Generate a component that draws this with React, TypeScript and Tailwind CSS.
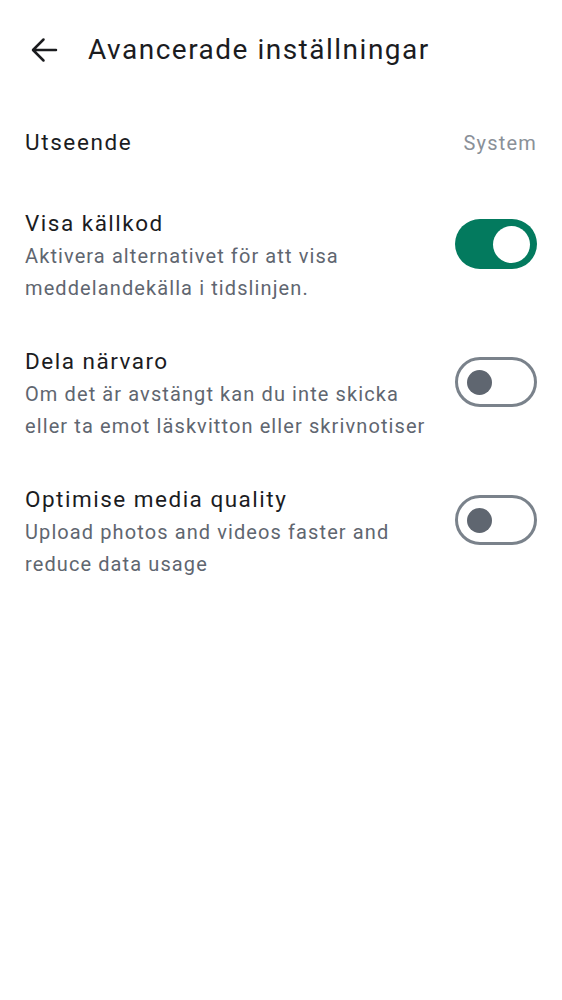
import { useState } from "react";

type Row = {
	readonly title: string;
	readonly desc: string;
	readonly on: boolean;
};

const rows: Row[] = [
	{ title: "Visa källkod", desc: "Aktivera alternativet för att visa meddelandekälla i tidslinjen.", on: true },
	{ title: "Dela närvaro", desc: "Om det är avstängt kan du inte skicka eller ta emot läskvitton eller skrivnotiser", on: false },
	{ title: "Optimise media quality", desc: "Upload photos and videos faster and reduce data usage", on: false },
];

function Toggle({ on, onClick }: { on: boolean; onClick: () => void }) {
	return (
		<button
			onClick={onClick}
			className={
				on
					? "mt-[13px] flex h-[50px] w-[82px] shrink-0 items-center justify-end rounded-full bg-[#037a5e] pr-[7px]"
					: "mt-[13px] flex h-[50px] w-[82px] shrink-0 items-center justify-start rounded-full border-[3px] border-[#7a828b] bg-white pl-[9px]"
			}
		>
			{on ? (
				<span className="h-[37px] w-[37px] rounded-full bg-white" />
			) : (
				<span className="h-[25px] w-[25px] rounded-full bg-[#5f6670]" />
			)}
		</button>
	);
}

export default function App() {
	const [state, setState] = useState<boolean[]>(rows.map((r) => r.on));

	return (
		<div className="min-h-[1000px] w-full bg-white font-['Roboto',sans-serif] text-[#1b1c1f]">
			<header className="flex h-[100px] items-center pl-[30px]">
				<svg width="28" height="28" viewBox="0 0 28 28" className="shrink-0">
					<path
						d="M26 14H3.5M13.5 3.5 3 14l10.5 10.5"
						fill="none"
						stroke="#1b1c1f"
						strokeWidth="2.5"
						strokeLinecap="round"
						strokeLinejoin="round"
					/>
				</svg>
				<h1 className="ml-[30px] text-[28px] leading-none tracking-[1.5px]">Avancerade inställningar</h1>
			</header>

			<div className="flex h-[86px] items-center justify-between px-[25px]">
				<span className="text-[22.5px] tracking-[1.6px]">Utseende</span>
				<span className="text-[20px] tracking-[1.2px] text-[#8a9098]">System</span>
			</div>

			{rows.map((row, i) => (
				<div key={i} className="flex items-start justify-between gap-4 px-[25px] py-[20px]">
					<div className="flex max-w-[412px] flex-col">
						<span className="text-[22.5px] leading-[34px] tracking-[1.5px]">{row.title}</span>
						<span className="text-[20px] leading-[32px] tracking-[1.1px] text-[#5f6670]">{row.desc}</span>
					</div>
					<Toggle
						on={state[i]}
						onClick={() => setState(state.map((v, j) => (j === i ? !v : v)))}
					/>
				</div>
			))}
		</div>
	);
}
